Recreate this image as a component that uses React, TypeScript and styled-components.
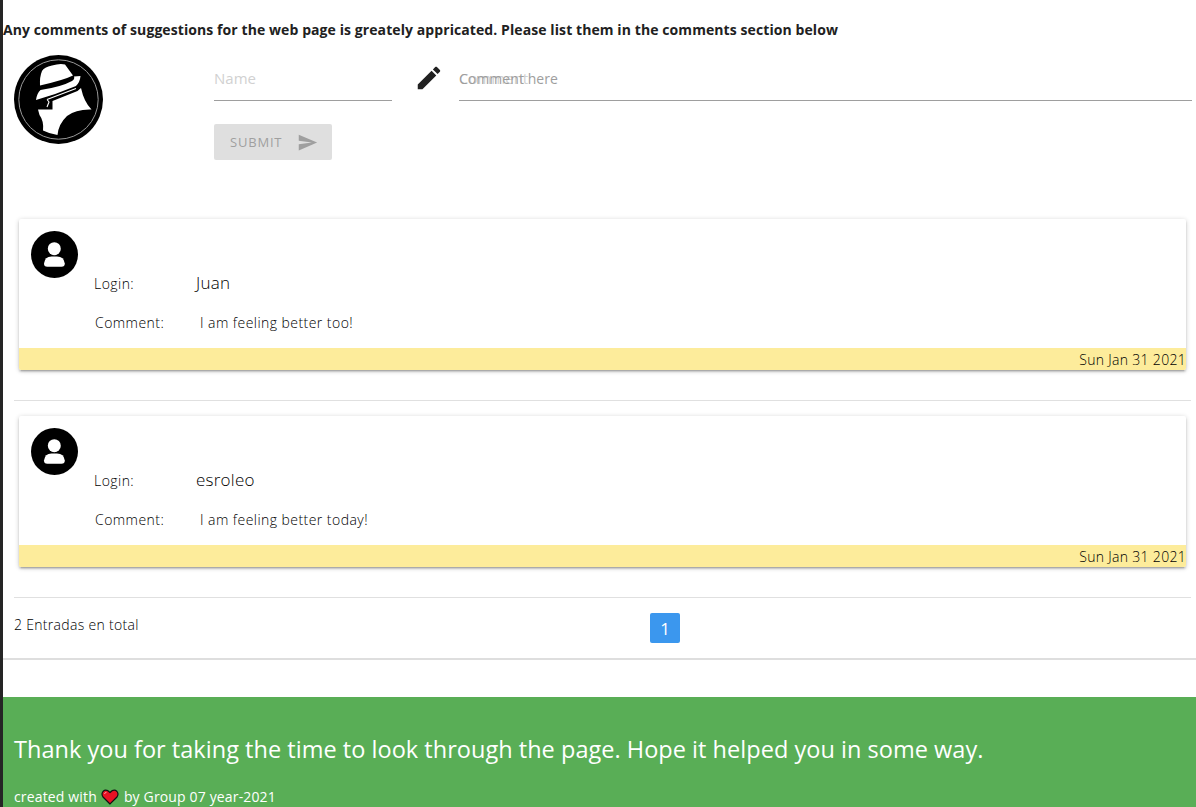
import React from "react";
import styled, { createGlobalStyle } from "styled-components";

const Global = createGlobalStyle`
  *, *::before, *::after { box-sizing: border-box; }
  html, body { margin: 0; padding: 0; }
  body {
    background: #fff;
    color: rgba(0, 0, 0, 0.87);
    font-family: "Segoe UI", "Open Sans", "Noto Sans", sans-serif;
    font-size: 14px;
    line-height: 22px;
    overflow: hidden;
  }
  h1, h2, p { margin: 0; }
`;

const Page = styled.div`
  height: 807px;
  border-left: 3px solid #252525;
  display: flex;
  flex-direction: column;
  overflow: hidden;
`;

const Notice = styled.h1`
  padding-top: 19px;
  font-size: 14px;
  line-height: 22px;
  font-weight: 700;
  letter-spacing: 0.085px;
  white-space: nowrap;
  color: #212121;
`;

const FormRow = styled.form`
  display: grid;
  grid-template-columns: 200px 178px 67px 1fr;
  padding: 14px 4px 0 11px;
  height: 177px;
  flex: none;
`;

const Logo = styled.svg`
  width: 89px;
  height: 89px;
`;

const NameColumn = styled.div`
  display: flex;
  flex-direction: column;
  align-items: flex-start;
`;

const Field = styled.div`
  position: relative;
  width: 100%;
  height: 46px;
  padding-top: 12px;
  border-bottom: 1px solid #9e9e9e;
  white-space: nowrap;
`;

const Placeholder = styled.span`
  display: block;
  font-size: 15px;
  color: #d1d1d1;
`;

const FieldLabel = styled.label`
  position: absolute;
  left: 0;
  top: 13px;
  color: #9e9e9e;
  letter-spacing: 0.05px;
`;

const PencilIcon = styled.svg`
  width: 30px;
  height: 30px;
  margin: 8px 0 0 22px;
  fill: #212121;
`;

const SubmitButton = styled.button`
  display: flex;
  align-items: center;
  width: 118px;
  height: 36px;
  margin-top: 23px;
  padding: 0 14px 0 16px;
  border: 0;
  border-radius: 2px;
  background: #dfdfdf;
  color: #9f9f9f;
  font: inherit;
  font-size: 13px;
  letter-spacing: 0.8px;
  justify-content: space-between;
`;

const List = styled.section`
  padding: 0 5px 0 11px;
`;

const Entry = styled.div`
  height: 183px;
  margin-bottom: 14px;
  border-bottom: 1px solid #e0e0e0;
  padding: 1px 5px 0;
`;

const Card = styled.article`
  height: 151px;
  display: grid;
  grid-template-columns: 75px 1fr;
  grid-template-rows: 129px 22px;
  background: #fff;
  border-radius: 2px;
  overflow: hidden;
  color: #000;
  font-weight: 300;
  box-shadow: 0 2px 2px 0 rgba(0, 0, 0, 0.14), 0 3px 1px -2px rgba(0, 0, 0, 0.12),
    0 1px 5px 0 rgba(0, 0, 0, 0.2);
`;

const Avatar = styled.svg`
  width: 47px;
  height: 47px;
  margin: 12px;
`;

const Details = styled.div`
  padding-top: 53px;
`;

const Line = styled.div<{ $labelWidth: number; $indent?: number }>`
  display: grid;
  grid-template-columns: ${(p) => p.$labelWidth}px auto;
  padding-left: ${(p) => p.$indent ?? 0}px;
  height: 39px;
  line-height: 24px;
  letter-spacing: 0.45px;
`;

const UserName = styled.span`
  font-size: 17px;
  line-height: 22px;
  letter-spacing: 0.25px;
`;

const DateBar = styled.footer`
  grid-column: 1 / -1;
  background: #fdec9b;
  text-align: right;
  line-height: 23px;
  letter-spacing: 0.3px;
`;

const Pager = styled.nav`
  display: grid;
  grid-template-columns: 636px 30px;
  height: 46px;
  align-items: start;
`;

const Total = styled.p`
  padding-top: 2px;
  color: #000;
  font-weight: 300;
  letter-spacing: 0.31px;
`;

const PageNumber = styled.span`
  height: 30px;
  margin-top: 1px;
  border-radius: 2px;
  background: #3b97ee;
  color: #fff;
  font-size: 17px;
  line-height: 31px;
  text-align: center;
`;

const Divider = styled.div`
  height: 2px;
  flex: none;
  background: #dedede;
`;

const PageFooter = styled.footer`
  flex: 1;
  margin-top: 37px;
  padding: 34px 11px 0;
  background: #59ae56;
  color: #fff;
  white-space: nowrap;
`;

const Thanks = styled.h2`
  font-size: 23.5px;
  line-height: 36px;
  font-weight: 400;
  letter-spacing: 0.03px;
`;

const Credit = styled.p`
  display: flex;
  align-items: center;
  margin-top: 19px;
  letter-spacing: 0.15px;
`;

const Heart = styled.svg`
  width: 18px;
  height: 16px;
  margin: 0 5px 0 4px;
`;

const entries = [
  { user: "Juan", comment: "I am feeling better too!", date: "Sun Jan 31 2021" },
  { user: "esroleo", comment: "I am feeling better today!", date: "Sun Jan 31 2021" },
];

const DetectiveLogo = () => (
  <Logo viewBox="0 0 89 89">
    <circle cx="44.5" cy="44.5" r="44.5" fill="#000" />
    <circle cx="44.5" cy="44.5" r="39.7" fill="none" stroke="#999" strokeWidth="1" />
    <path
      fill="#fff"
      d="M28 16 Q30 12 38 10.5 Q46 8 51 9.5 L59 20.5 Q50 25 26 30.5 Q25.5 22 28 16 Z"
    />
    <path
      fill="#fff"
      d="M22 45 Q23 38 26.5 35 Q47 32 58 26 Q61 24 60 21.5 L66.5 21 Q66 27 62 31 Q43 39 22 45 Z"
    />
    <path
      fill="#fff"
      d="M38.5 46 L63.5 36 L67 33 Q70 47 77.5 54.5 Q62 54 53 61 Q44.5 69 43.5 80 Q36 79 29 75.5 Q30 66 25.5 60 L24 54.5 L38.5 54.5 Z"
    />
    <path fill="none" stroke="#fff" strokeWidth="1.1" d="M33 44.5 L62 33.5 M33 44.5 L35 47 L33 52" />
  </Logo>
);

const UserAvatar = () => (
  <Avatar viewBox="0 0 47 47">
    <circle cx="23.5" cy="23.5" r="23.5" fill="#000" />
    <circle cx="23.3" cy="17.7" r="6.5" fill="#fff" />
    <path
      fill="#fff"
      d="M13 32.5 Q13.8 25.5 20.5 25.5 H26 Q33 25.5 33.8 32.5 Q33.8 35.8 30.5 35.8 H16.3 Q13 35.8 13 32.5 Z"
    />
  </Avatar>
);

export default function App() {
  return (
    <>
      <Global />
      <Page>
        <Notice>
          Any comments of suggestions for the web page is greately appricated. Please list them in
          the comments section below
        </Notice>
        <FormRow>
          <DetectiveLogo />
          <NameColumn>
            <Field>
              <Placeholder>Name</Placeholder>
            </Field>
            <SubmitButton type="button" disabled>
              SUBMIT
              <svg width="21" height="21" viewBox="0 0 24 24" fill="#9f9f9f">
                <path d="M2.01 21L23 12 2.01 3 2 10l15 2-15 2z" />
              </svg>
            </SubmitButton>
          </NameColumn>
          <PencilIcon viewBox="0 0 24 24">
            <path d="M3 17.25V21h3.75L17.81 9.94l-3.75-3.75L3 17.25zM20.71 7.04c.39-.39.39-1.02 0-1.41l-2.34-2.34c-.39-.39-1.02-.39-1.41 0l-1.83 1.83 3.75 3.75 1.83-1.83z" />
          </PencilIcon>
          <Field>
            <Placeholder>Comment</Placeholder>
            <FieldLabel>Comment here</FieldLabel>
          </Field>
        </FormRow>
        <List>
          {entries.map((e) => (
            <Entry key={e.user}>
              <Card>
                <UserAvatar />
                <Details>
                  <Line $labelWidth={102}>
                    <span>Login:</span>
                    <UserName>{e.user}</UserName>
                  </Line>
                  <Line $labelWidth={105} $indent={1}>
                    <span>Comment:</span>
                    <span>{e.comment}</span>
                  </Line>
                </Details>
                <DateBar>{e.date}</DateBar>
              </Card>
            </Entry>
          ))}
          <Pager>
            <Total>2 Entradas en total</Total>
            <PageNumber>1</PageNumber>
          </Pager>
        </List>
        <Divider />
        <PageFooter>
          <Thanks>
            Thank you for taking the time to look through the page. Hope it helped you in some way.
          </Thanks>
          <Credit>
            created with
            <Heart viewBox="0 0 18 16">
              <path
                d="M9 15 L2 8 Q0 5 2 2.5 Q5 -0.5 9 3.5 Q13 -0.5 16 2.5 Q18 5 16 8 Z"
                fill="#e81224"
                stroke="#111"
                strokeWidth="1.2"
              />
              <path d="M3.5 5 Q3.8 3.3 5.5 3.3" fill="none" stroke="#ff9aa4" strokeWidth="1" />
            </Heart>
            by Group 07 year-2021
          </Credit>
        </PageFooter>
      </Page>
    </>
  );
}
